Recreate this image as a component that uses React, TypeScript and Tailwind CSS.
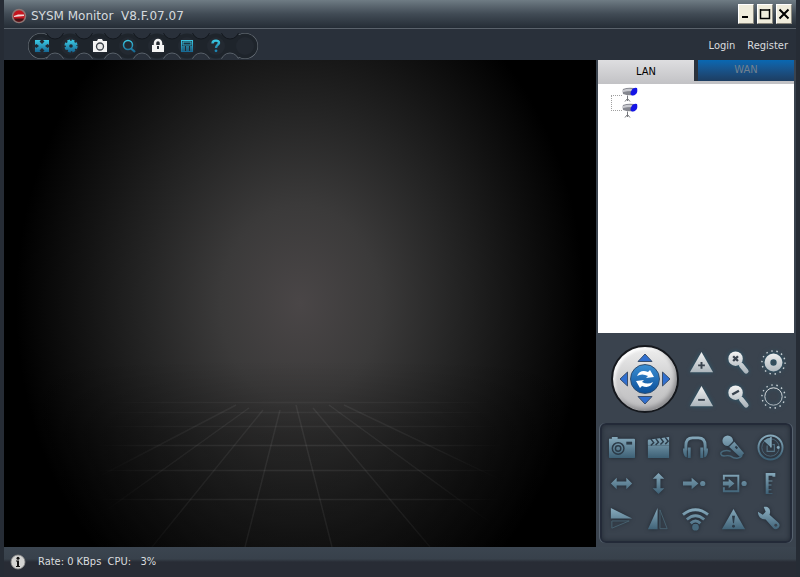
import type { ReactNode } from "react";

const font = "font-['DejaVu_Sans_Condensed','DejaVu_Sans',sans-serif]";

/* Gradients shared by every icon on the page */
function IconGradients() {
  return (
    <svg className="absolute size-0" aria-hidden="true">
      <defs>
        <linearGradient id="steel" x1="0" y1="3" x2="0" y2="25" gradientUnits="userSpaceOnUse">
          <stop offset="0" stopColor="#86a9bb" />
          <stop offset="1" stopColor="#3d6075" />
        </linearGradient>
        <linearGradient id="silver" x1="0" y1="3" x2="0" y2="25" gradientUnits="userSpaceOnUse">
          <stop offset="0" stopColor="#f2f2f2" />
          <stop offset="1" stopColor="#aab4bb" />
        </linearGradient>
        <linearGradient id="cyan" x1="0" y1="3" x2="0" y2="16" gradientUnits="userSpaceOnUse">
          <stop offset="0" stopColor="#3ccbe6" />
          <stop offset="1" stopColor="#125f8c" />
        </linearGradient>
      </defs>
    </svg>
  );
}

type IconItem = { label: string; icon: ReactNode };

const toolbar: IconItem[] = [
  {
    label: "Full screen",
    icon: (
      <g fill="url(#cyan)">
        <path d="M2 3h6L6.500 4.500 9 7l2.500-2.500L10 3h6v5l-1.500-1L12 9l2.500 2 1.500-1v5h-6l1.500-1.500L9 11l-2.500 2.500L8 15H2v-5l1.500 1L6 9 3.500 7 2 8z" />
      </g>
    ),
  },
  {
    label: "Settings",
    icon: (
      <g>
        <circle cx="9" cy="9" r="3.500" fill="none" stroke="url(#cyan)" strokeWidth="3.400" />
        <circle cx="9" cy="9" r="5.500" fill="none" stroke="url(#cyan)" strokeWidth="2.200" strokeDasharray="2.800 1.520" />
      </g>
    ),
  },
  {
    label: "Snapshot",
    icon: (
      <g>
        <path d="M2 4h4l1-2h4l1 2h4v11H2z" fill="#f4f4f4" />
        <circle cx="9" cy="9.500" r="3.500" fill="#e8e8e8" stroke="#3a4048" strokeWidth="1.300" />
      </g>
    ),
  },
  {
    label: "Search",
    icon: (
      <g fill="none" stroke="url(#cyan)">
        <circle cx="8" cy="8" r="4.500" strokeWidth="1.500" />
        <path d="M11 11.500l4 3.500" strokeWidth="2.200" />
      </g>
    ),
  },
  {
    label: "Lock",
    icon: (
      <g>
        <path d="M6 9V6a3 3 0 0 1 6 0v3" fill="none" stroke="#f4f4f4" strokeWidth="2.500" />
        <path d="M3 8h12v7H3z" fill="#f4f4f4" />
        <path d="M8 9h2v3H8z" fill="#2b323b" />
      </g>
    ),
  },
  {
    label: "Calculator",
    icon: (
      <g fill="none" stroke="url(#cyan)">
        <rect x="3.500" y="3.500" width="11" height="11" />
        <rect x="5" y="5" width="8" height="3" fill="#1a3442" />
        <path d="M4 10h10M4 12h10M4 14h10" strokeDasharray="3 1" strokeWidth="1.500" />
      </g>
    ),
  },
  {
    label: "Help",
    icon: (
      <g>
        <path d="M5.500 6.500C5.500 2.600 12.500 2.800 12 6c-.3 2-3 2-3 5" fill="none" stroke="url(#cyan)" strokeWidth="2.400" />
        <circle cx="9" cy="13.800" r="1.400" fill="#1c86b4" />
      </g>
    ),
  },
];

const lens: IconItem[] = [
  {
    label: "Focus near",
    icon: (
      <g>
        <path d="M14 3L26 24H2z" fill="url(#silver)" />
        <path d="M14 13.500v7M10.500 17h7" stroke="#39434e" strokeWidth="2" />
      </g>
    ),
  },
  {
    label: "Zoom in",
    icon: (
      <g>
        <path d="M18 17l5 6" stroke="url(#silver)" strokeWidth="5" strokeLinecap="round" />
        <circle cx="12" cy="10" r="7.500" fill="url(#silver)" />
        <path d="M9.500 7.500l5 5M14.500 7.500l-5 5" stroke="#39434e" strokeWidth="2.400" />
      </g>
    ),
  },
  {
    label: "Iris open",
    icon: (
      <g fill="none">
        <circle cx="14" cy="14" r="6.300" stroke="url(#silver)" strokeWidth="6" />
        <circle cx="14" cy="14" r="12" stroke="#c8d0d4" strokeWidth="1.500" strokeDasharray="1.500 3.880" />
      </g>
    ),
  },
  {
    label: "Focus far",
    icon: (
      <g>
        <path d="M14 3L26 24H2z" fill="url(#silver)" />
        <path d="M10.500 17.500h7" stroke="#39434e" strokeWidth="2" />
      </g>
    ),
  },
  {
    label: "Zoom out",
    icon: (
      <g>
        <path d="M18 17l5 6" stroke="url(#silver)" strokeWidth="5" strokeLinecap="round" />
        <circle cx="12" cy="10" r="7.500" fill="url(#silver)" />
        <path d="M8.500 12l7-4" stroke="#39434e" strokeWidth="2.400" />
      </g>
    ),
  },
  {
    label: "Iris close",
    icon: (
      <g fill="none">
        <circle cx="14" cy="14" r="9" stroke="url(#silver)" strokeWidth="1" />
        <circle cx="14" cy="14" r="12" stroke="#c8d0d4" strokeWidth="1.500" strokeDasharray="1.500 3.880" />
      </g>
    ),
  },
];

const actions: IconItem[] = [
  {
    label: "Take picture",
    icon: (
      <g>
        <path d="M1 5h3V3h6v2h17q1 0 1 1v18q0 1-1 1H2q-1 0-1-1z" fill="url(#steel)" />
        <circle cx="10.500" cy="15" r="6" fill="none" stroke="#2b3a47" strokeWidth="1.500" />
        <circle cx="10.500" cy="15" r="2.800" fill="none" stroke="#2b3a47" strokeWidth="1.500" />
        <path d="M19 8h6v3h-6z" fill="#2b3a47" />
      </g>
    ),
  },
  {
    label: "Record",
    icon: (
      <g>
        <path d="M3 12h22v13H3zM3 6l22-3v4L3 11z" fill="url(#steel)" />
        <path d="M3 7h22v5H3z" fill="url(#steel)" />
        <path d="M6 5l3 4-3 3M11 4.500l3 4-3 3M16 4l3 4-3 3M21 3.500l3 4-3 3" fill="none" stroke="#2b3a47" strokeWidth="1.500" />
      </g>
    ),
  },
  {
    label: "Listen",
    icon: (
      <g>
        <path d="M4 17V12Q4 4 11 4h6q7 0 7 8v5" fill="none" stroke="url(#steel)" strokeWidth="3" />
        <path d="M1 15h4v9H4q-3-2-3-9zM6 14h3v11H6zM27 15h-4v9h1q3-2 3-9zM22 14h-3v11h3z" fill="url(#steel)" />
      </g>
    ),
  },
  {
    label: "Talk",
    icon: (
      <g>
        <path d="M11 18c-5-2-11 0-10 3 1 4 6 0 10 2 4 3 10 3 12-1" fill="none" stroke="#47687b" strokeWidth="1.500" />
        <path d="M14 7l11 13-4 4L9 13z" fill="url(#steel)" />
        <circle cx="8" cy="7" r="5.500" fill="url(#steel)" />
        <path d="M8 14l7-7" stroke="#2b3a47" strokeWidth="1.200" />
        <path d="M16 13l2 2" stroke="#2b3a47" strokeWidth="2" />
      </g>
    ),
  },
  {
    label: "Cruise",
    icon: (
      <g>
        <circle cx="14" cy="14" r="12.500" fill="none" stroke="url(#steel)" strokeWidth="2" />
        <circle cx="14" cy="14" r="9" fill="none" stroke="#4b6678" strokeWidth="1" />
        <path d="M14.500 14V3.500A11 11 0 0 0 7 7z" fill="#6f93a6" />
        <path d="M14.500 3v11" stroke="#86a9bb" strokeWidth="1.500" />
        <path d="M10.500 12v6h7.500v-7h-2" fill="none" stroke="#557486" strokeWidth="1.200" />
        <circle cx="22" cy="14" r="1.500" fill="#86a9bb" />
      </g>
    ),
  },
  {
    label: "Pan",
    icon: <path d="M3 14l6-6v4h10V8l6 6-6 6v-4H9v4z" fill="url(#steel)" />,
  },
  {
    label: "Tilt",
    icon: <path d="M14 3l6 6h-4v10h4l-6 6-6-6h4V9H8z" fill="url(#steel)" />,
  },
  {
    label: "Go to preset",
    icon: (
      <g fill="url(#steel)">
        <path d="M1 12h9V8l7 6-7 6v-4H1z" />
        <circle cx="21.500" cy="14" r="2.700" />
      </g>
    ),
  },
  {
    label: "Set preset",
    icon: (
      <g fill="url(#steel)">
        <path d="M3 5h17v18H3v-5h2v3h13V7H5v3H3z" />
        <path d="M3 12h6V9l6 5-6 5v-3H3z" />
        <circle cx="25" cy="14" r="2.700" />
      </g>
    ),
  },
  {
    label: "Speed",
    icon: (
      <path d="M9 3h10v4h-3V6h-4v5h4v1h-4v3h3v1h-3v4h3v1h-3v3h4v1H9z" fill="url(#steel)" />
    ),
  },
  {
    label: "Flip",
    icon: (
      <g>
        <path d="M3 2v11h22z" fill="url(#steel)" />
        <path d="M4 15.500h18L4 23z" fill="none" stroke="#47616f" />
      </g>
    ),
  },
  {
    label: "Mirror",
    icon: (
      <g>
        <path d="M13 2v22H3z" fill="url(#steel)" />
        <path d="M15.500 4v19.500H23z" fill="none" stroke="#47616f" />
      </g>
    ),
  },
  {
    label: "Wireless",
    icon: (
      <g fill="none" stroke="url(#steel)" strokeWidth="3">
        <path d="M1 9q13-10 26 0M5 14q9-8 18 0M9 18q5-5 10 0" />
        <circle cx="14" cy="22" r="2.500" fill="#46697d" stroke="#46697d" strokeWidth="2" />
      </g>
    ),
  },
  {
    label: "Alarm",
    icon: (
      <g>
        <path d="M14 3l12 21H2z" fill="url(#steel)" />
        <path d="M12.500 10h3l-1 8h-1z" fill="#2b3a47" />
        <circle cx="14" cy="21" r="1.500" fill="#2b3a47" />
      </g>
    ),
  },
  {
    label: "Tools",
    icon: (
      <g>
        <path d="M1 6l5 3 3-3-2-5c5-1 8 3 6 8l9 8q3 3 0 6-3 2-5 0L9 14C4 14 1 11 1 6z" fill="url(#steel)" />
        <circle cx="19.500" cy="20" r="1.500" fill="#39434e" />
      </g>
    ),
  },
];

function TitleBar() {
  const button =
    "flex h-5 w-4 items-center justify-center border border-t-white border-l-white border-r-[#8c8a80] border-b-[#8c8a80] bg-[#efecdc]";
  return (
    <header className="flex h-[29px] items-center justify-between border-b border-[#5a626b] bg-linear-to-b from-[#6f7c84] via-[#414b55] to-[#252d36] pr-1 pl-[7px]">
      <div className="flex items-center gap-1 pt-1">
        <svg className="size-4" viewBox="0 0 16 16" aria-hidden="true">
          <circle cx="8" cy="8" r="6.500" fill="#c4161f" stroke="#8d7775" strokeWidth="1.500" />
          <path d="M3 10.500a5.500 5.500 0 0 0 10 0z" fill="#4c1216" />
          <path d="M3 8l4-1.500h6v1.500l-10 1z" fill="#f2d9d9" />
        </svg>
        <h1 className="font-['DejaVu_Sans',sans-serif] text-[12px] leading-4 whitespace-pre text-[#d5dade]">
          SYSM Monitor  V8.F.07.07
        </h1>
      </div>
      <div className="flex gap-[3px]">
        <button type="button" aria-label="Minimize" className={button}>
          <svg className="size-[14px] shrink-0" viewBox="0 0 14 14"><path d="M3 10h6" stroke="#000" strokeWidth="2" /></svg>
        </button>
        <button type="button" aria-label="Maximize" className={button}>
          <svg className="size-[14px] shrink-0" viewBox="0 0 14 14"><path d="M2.500 2v9.500h9V2M2 3h10" fill="none" stroke="#000" strokeWidth="1.500" /></svg>
        </button>
        <button type="button" aria-label="Close" className={button}>
          <svg className="size-[14px] shrink-0" viewBox="0 0 14 14"><path d="M2.500 2.500l9 9M11.500 2.500l-9 9" stroke="#000" strokeWidth="2" /></svg>
        </button>
      </div>
    </header>
  );
}

const trayBeads = [14, 43, 72, 101, 130, 160, 189, 218];
const trayNecks = [28, 57, 86, 115, 145, 174, 203];

function Toolbar() {
  return (
    <nav className="flex h-[31px] items-center justify-between bg-[#29303a] pt-[3px] pr-2 pl-[23px]">
      <div className="relative h-[26px] w-[232px]">
        {/* Beaded tray behind the icons */}
        <svg className="absolute inset-0 h-full w-full" viewBox="0 0 232 26" aria-hidden="true">
          <g fill="#747c84">
            <circle cx="14" cy="13" r="13" />
            <circle cx="218" cy="13" r="13" />
          </g>
          <g fill="#1e242b">
            {trayBeads.map((x) => (
              <circle key={x} cx={x} cy="13" r="12.500" />
            ))}
            <path d="M14 2h204v22H14z" />
          </g>
          {trayNecks.map((x) => (
            <g key={x} fill="#29303a">
              <circle cx={x} cy="-3" r="9" stroke="#14181e" />
              <circle cx={x} cy="29" r="9" stroke="#59616a" />
            </g>
          ))}
          <g fill="#232931">
            {trayBeads.map((x) => (
              <circle key={x} cx={x} cy="13" r="9" />
            ))}
          </g>
        </svg>
        <div className="relative flex h-full items-center">
          {toolbar.map((item) => (
            <button key={item.label} type="button" aria-label={item.label} className="flex w-[29px] justify-center">
              <svg className="size-[18px]" viewBox="0 0 18 18">{item.icon}</svg>
            </button>
          ))}
        </div>
      </div>
      <div className="flex gap-3 text-[11px] text-[#d9dcdf]">
        <a href="#login">Login</a>
        <a href="#register">Register</a>
      </div>
    </nav>
  );
}

function VideoView() {
  return (
    <main className="min-w-0 flex-1 bg-black bg-[radial-gradient(ellipse_48%_72%_at_50%_50%,#4a4647_0%,#3b3a3a_28%,#252525_54%,#131313_76%,#000_100%)]">
      {/* Perspective floor */}
      <svg className="h-full w-full" viewBox="0 0 592 487" preserveAspectRatio="none" aria-hidden="true">
        <defs>
          <radialGradient id="floorFade" cx="296" cy="400" r="210" gradientUnits="userSpaceOnUse">
            <stop offset="0" stopColor="#fff" />
            <stop offset="0.600" stopColor="#fff" stopOpacity="0.700" />
            <stop offset="1" stopColor="#fff" stopOpacity="0" />
          </radialGradient>
          <linearGradient id="floorShade" x1="0" y1="0" x2="0" y2="1">
            <stop offset="0" stopColor="#000" stopOpacity="0" />
            <stop offset="0.400" stopColor="#000" stopOpacity="0.220" />
            <stop offset="1" stopColor="#000" stopOpacity="0.300" />
          </linearGradient>
          <mask id="floorMask">
            <rect width="592" height="487" fill="url(#floorFade)" />
          </mask>
        </defs>
        <rect y="300" width="592" height="187" fill="url(#floorShade)" />
        <g mask="url(#floorMask)" stroke="#fff" strokeWidth="1.500">
          <path d="M60 342.500h472M60 352.500h472M60 366.500h472" strokeOpacity="0.050" />
          <path d="M60 385.500h472M60 410.500h472M60 439.500h472" strokeOpacity="0.080" />
          <path
            d="M276 350L241 487M292 345L328 487M309 348L426 487M325 345L520 487M340 345L560 450M259 350L148 487M245 348L75 470M232 345L50 440"
            strokeOpacity="0.070"
          />
        </g>
      </svg>
    </main>
  );
}

function CameraNode({ label }: { label: string }) {
  return (
    <li className="h-4">
      <button type="button" aria-label={label} className="block">
        <svg className="size-4" viewBox="0 0 16 16">
          <path d="M1 2q5-2 11-1v7q-6 1-11-1-1-3 0-5z" fill="#85878f" />
          <path d="M1 3q5-2 9-1v2q-5 0-9 1z" fill="#c9cad0" />
          <path d="M10 8.500q-3-1 0-6 2-2.500 5-1.500 1 4-1 6-2 2-4 1.500z" fill="#1414e6" />
          <path d="M5.500 8.500v3L3 14.500M5.500 11.500L8 14.500M5.500 9v5" fill="none" stroke="#75777c" />
        </svg>
      </button>
    </li>
  );
}

function DeviceTree() {
  return (
    <section className="flex flex-1 flex-col px-[2px]">
      <div role="tablist" className="flex h-[24px] bg-[#c2c2c5] text-[11px]">
        <button
          type="button"
          role="tab"
          aria-selected="true"
          className="flex-1 bg-linear-to-b from-[#dedee0] to-[#c2c2c5] text-black"
        >
          LAN
        </button>
        <div className="h-[21px] w-1 bg-[#2b323c]" />
        <button
          type="button"
          role="tab"
          aria-selected="false"
          className="h-[21px] flex-1 bg-linear-to-b from-[#0868b2] to-[#1c3d61] text-[#72818f]"
        >
          WAN
        </button>
      </div>
      <div role="tabpanel" className="flex min-h-[200px] flex-1 bg-white pt-[3px] pl-[13px]">
        <div className="mt-2 h-4 w-[11px] border-y border-l border-dotted border-[#a0a0a0]" />
        <ul>
          <CameraNode label="Camera 1" />
          <CameraNode label="Camera 2" />
        </ul>
      </div>
    </section>
  );
}

function Joystick() {
  return (
    <div className="grid size-[68px] shrink-0 grid-cols-3 grid-rows-3 rounded-full border-2 border-[#15181d] bg-linear-to-b from-[#efefef] via-[#cfcfd0] to-[#bdbdbf] shadow-[inset_-2px_-3px_4px_#8c8c8f,inset_2px_2px_3px_#fff]">
      <button type="button" aria-label="Up" className="col-start-2 row-start-1 flex items-center justify-center">
        <svg className="size-4" viewBox="0 0 16 16"><path d="M8 4l7 7.500H1z" fill="#2f6fd0" stroke="#3a4e6b" /></svg>
      </button>
      <button type="button" aria-label="Left" className="col-start-1 row-start-2 flex items-center justify-center">
        <svg className="size-4" viewBox="0 0 16 16"><path d="M4 8l7.500-7v14z" fill="#2f6fd0" stroke="#3a4e6b" /></svg>
      </button>
      <button
        type="button"
        aria-label="Auto scan"
        className="col-start-2 row-start-2 flex size-[30px] items-center justify-center place-self-center rounded-full border border-[#2d4d70] bg-linear-to-b from-[#3a8ed2] to-[#0b519c]"
      >
        <svg className="size-6 shrink-0" viewBox="0 0 24 24" fill="#fff">
          <path d="M4 9Q7 2 15 5l2-2 4 7-8 1 2-2Q9 6 4 9z" />
          <path d="M20 15q-3 7-11 4l-2 2-4-7 8-1-2 2q6 3 11 0z" />
        </svg>
      </button>
      <button type="button" aria-label="Right" className="col-start-3 row-start-2 flex items-center justify-center">
        <svg className="size-4" viewBox="0 0 16 16"><path d="M12 8L4.500 1v14z" fill="#2f6fd0" stroke="#3a4e6b" /></svg>
      </button>
      <button type="button" aria-label="Down" className="col-start-2 row-start-3 flex items-center justify-center">
        <svg className="size-4" viewBox="0 0 16 16"><path d="M8 12l7-7.500H1z" fill="#2f6fd0" stroke="#3a4e6b" /></svg>
      </button>
    </div>
  );
}

function ControlPanel() {
  return (
    <section className="bg-[#3a434e] px-1 pt-3 pb-1">
      <div className="flex items-center gap-1 pl-[11px]">
        <Joystick />
        <div className="grid flex-1 grid-cols-3">
          {lens.map((item) => (
            <button key={item.label} type="button" aria-label={item.label} className="flex h-[34px] items-center justify-center">
              <svg className="size-[27px] drop-shadow-[0_0_2px_#2a5b70]" viewBox="0 0 28 28">{item.icon}</svg>
            </button>
          ))}
        </div>
      </div>
      <div className="mt-[10px] grid grid-cols-5 rounded-md border-2 border-[#232a38] bg-[#3a434e] px-px py-1 shadow-[inset_0_0_5px_#232a34,1px_0_0_#56616e,-1px_0_0_#56616e]">
        {actions.map((item) => (
          <button key={item.label} type="button" aria-label={item.label} className="flex h-[36px] items-center justify-center">
            <svg className="size-[27px] drop-shadow-[0_0_2px_#1d2630]" viewBox="0 0 28 28">{item.icon}</svg>
          </button>
        ))}
      </div>
    </section>
  );
}

function StatusBar() {
  return (
    <footer className="flex h-[30px] items-center gap-3 bg-linear-to-b from-[#3b4550] from-0% via-[#38414b] via-40% to-[#282c35] to-50% pl-[6px] text-[11px] text-[#d9dcdf]">
      <svg className="size-4" viewBox="0 0 16 16" aria-hidden="true">
        <circle cx="8" cy="8" r="7" fill="#d4d4d2" stroke="#8d8d8b" strokeWidth="0.800" />
        <circle cx="8" cy="4.300" r="1.500" fill="#111" />
        <path d="M6 6.500h3V12h1v1H6v-1h1V7.500H6z" fill="#111" />
      </svg>
      <p className="whitespace-pre">Rate: 0 KBps  CPU:   3%</p>
    </footer>
  );
}

export default function App() {
  return (
    <div className={`flex min-h-screen flex-col bg-[#262c35] px-1 ${font}`}>
      <IconGradients />
      <TitleBar />
      <Toolbar />
      <div className="flex flex-1">
        <VideoView />
        <aside className="flex w-[200px] flex-col bg-[#3a434e]">
          <DeviceTree />
          <ControlPanel />
        </aside>
      </div>
      <StatusBar />
    </div>
  );
}
